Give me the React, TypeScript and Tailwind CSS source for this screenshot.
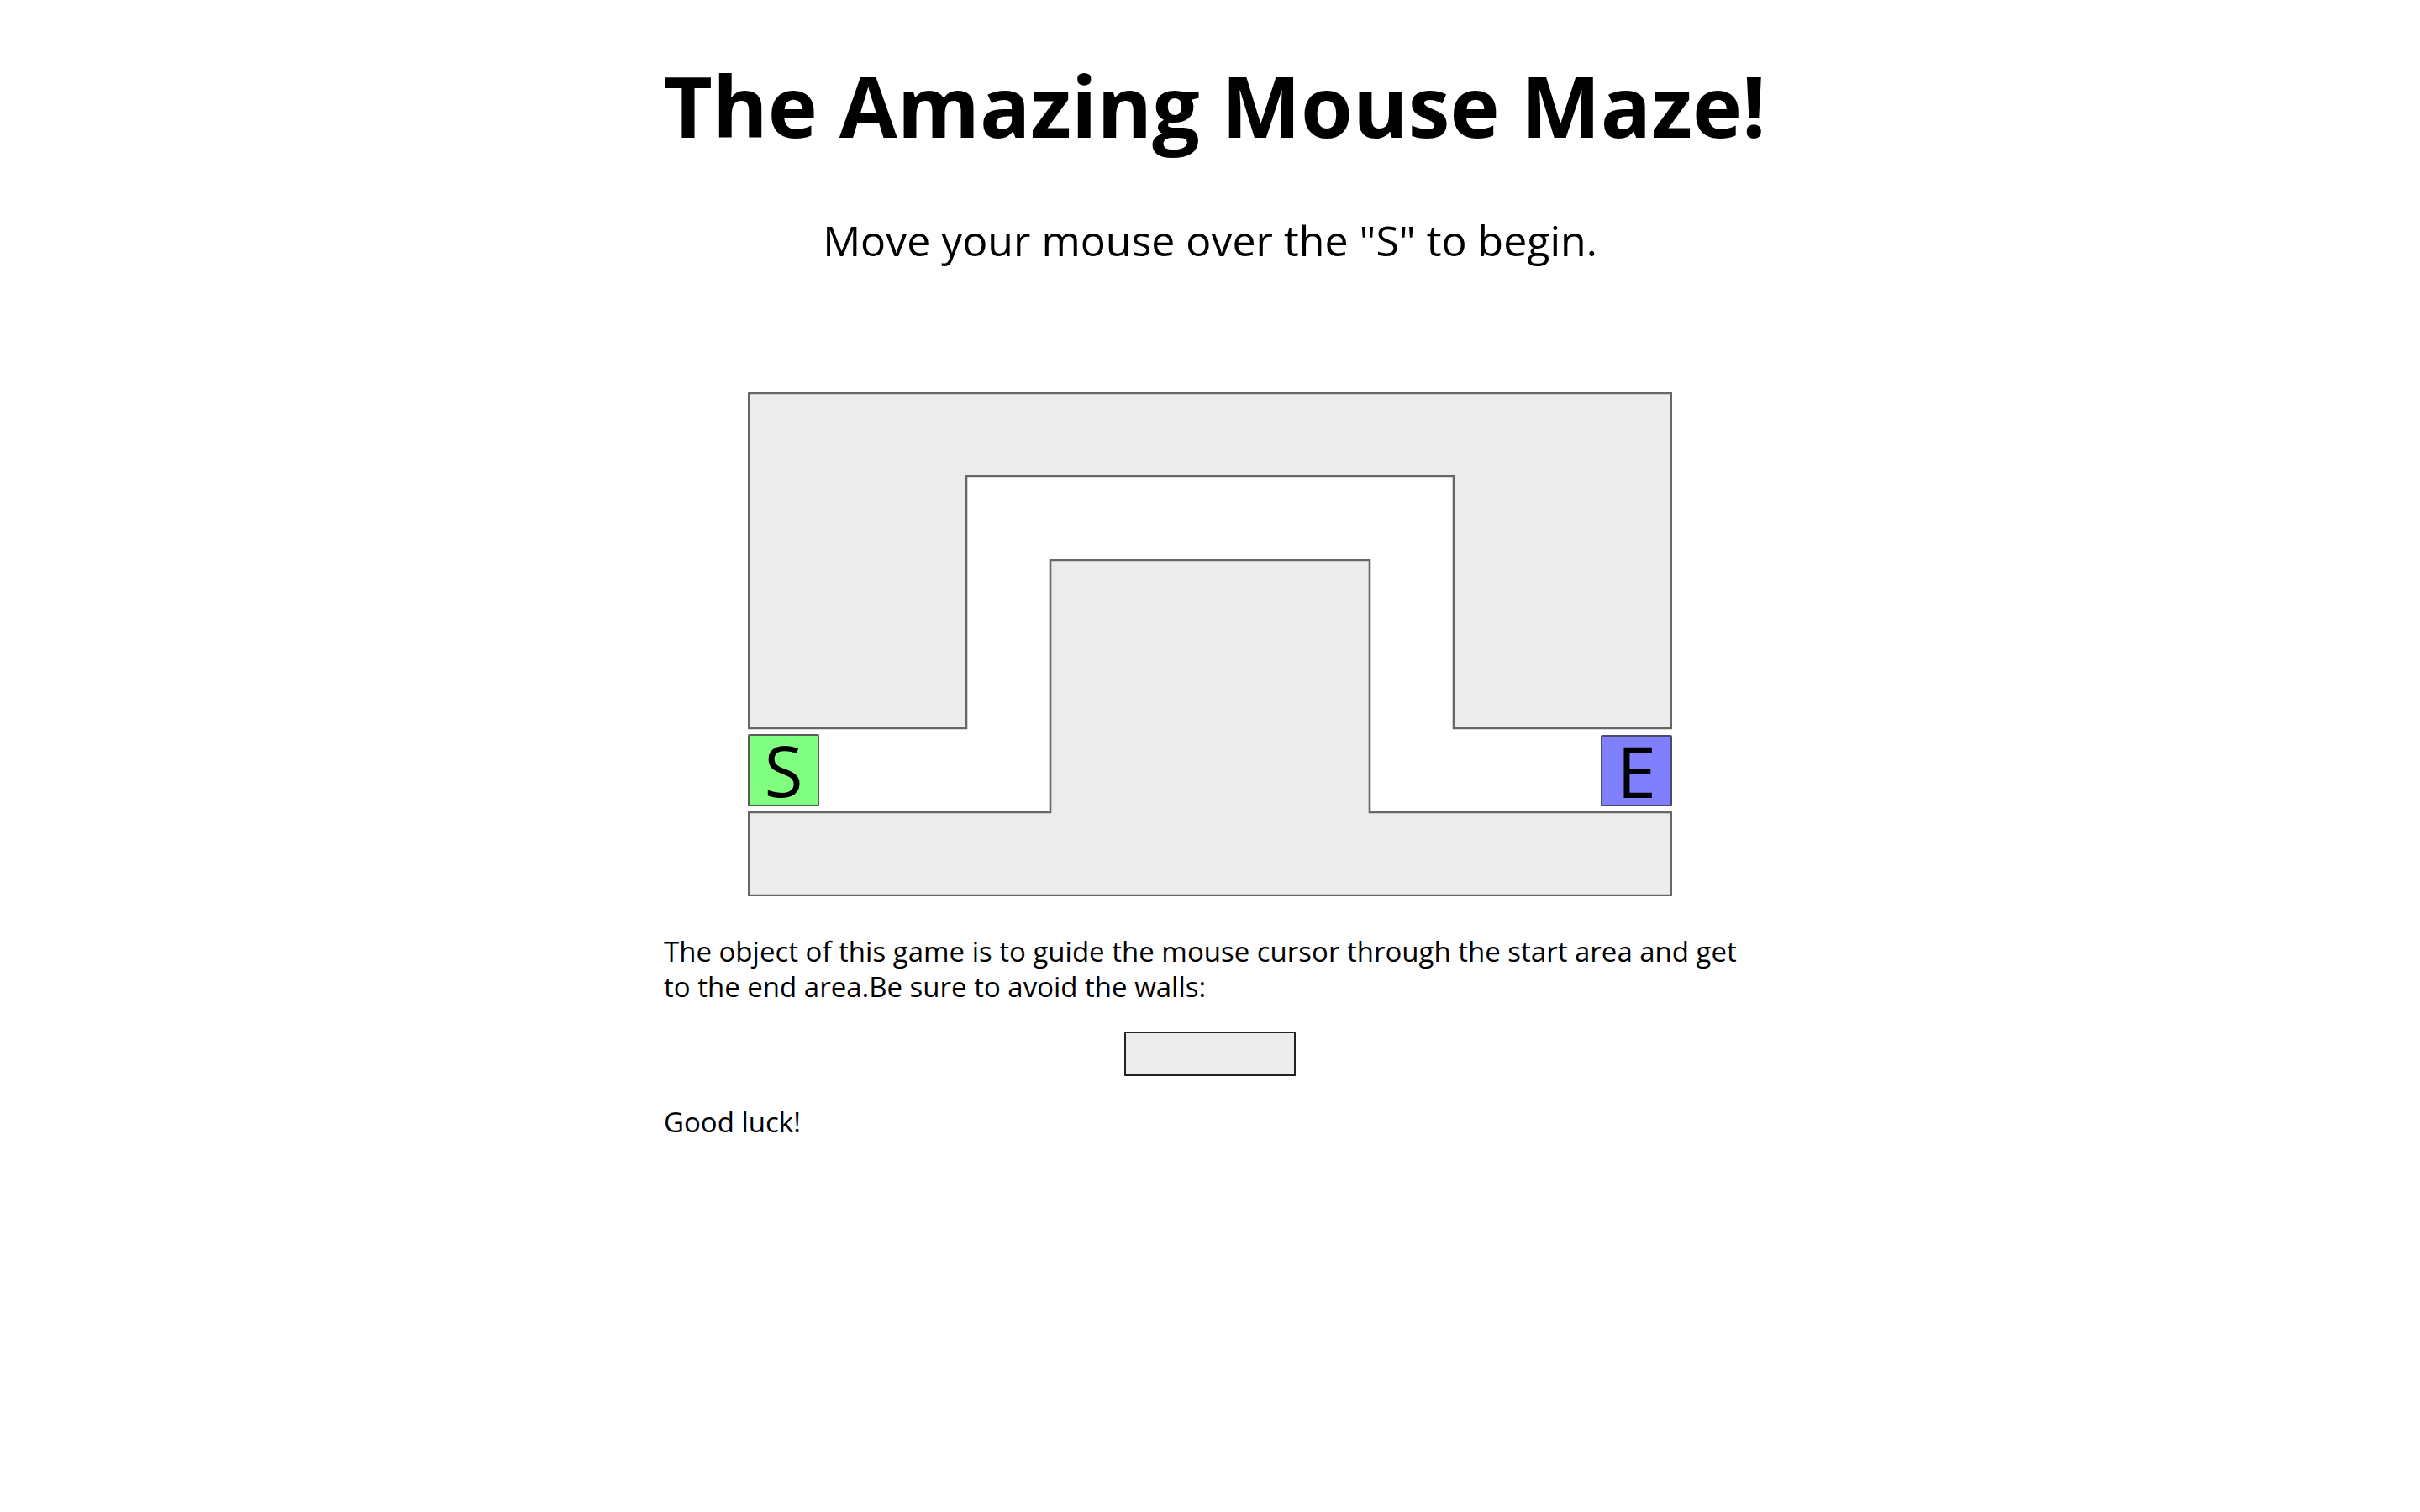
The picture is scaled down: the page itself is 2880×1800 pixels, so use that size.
import React from 'react'

const font = { fontFamily: '"Open Sans", "Noto Sans", sans-serif' }

function Maze() {
  return (
    <div className="relative mx-auto h-[600px] w-[1100px]">
      <svg width="1100" height="600" viewBox="0 0 1100 600" className="absolute left-0 top-0">
        <polygon
          points="1,1 1099,1 1099,400 840,400 840,100 260,100 260,400 1,400"
          fill="#ececec"
          stroke="#676767"
          strokeWidth="2.6"
        />
        <polygon
          points="1,500 360,500 360,200 740,200 740,500 1099,500 1099,599 1,599"
          fill="#ececec"
          stroke="#676767"
          strokeWidth="2.6"
        />
      </svg>
      <div className="absolute left-0 top-[407px] flex h-[86px] w-[85px] items-center justify-center rounded-[2px] border-2 border-[#5a5a5a] bg-[#80ff80] text-[84px] leading-none text-black">
        S
      </div>
      <div className="absolute left-[1015px] top-[408px] flex h-[85px] w-[85px] items-center justify-center rounded-[2px] border-2 border-[#4a4a6a] bg-[#8080ff] text-[84px] leading-none text-black">
        E
      </div>
    </div>
  )
}

export default function App() {
  return (
    <div className="min-h-screen bg-white text-black" style={font}>
      <div className="mx-auto w-[1300px] pt-[75px]">
        <h1 className="whitespace-nowrap text-center text-[100px] font-bold leading-none">The Amazing Mouse Maze!</h1>
        <p className="mt-[86px] text-center text-[50px] leading-none">Move your mouse over the "S" to begin.</p>
        <div className="mt-[156px]">
          <Maze />
        </div>
        <p className="mt-[45px] text-[33px] leading-[42px]">
          The object of this game is to guide the mouse cursor through the start area and get to the end
          area.Be sure to avoid the walls:
        </p>
        <div className="mx-auto mt-[32px] h-[53px] w-[204px] border-2 border-[#222] bg-[#ececec]" />
        <p className="mt-[34px] text-[33px] leading-[42px]">Good luck!</p>
      </div>
    </div>
  )
}
